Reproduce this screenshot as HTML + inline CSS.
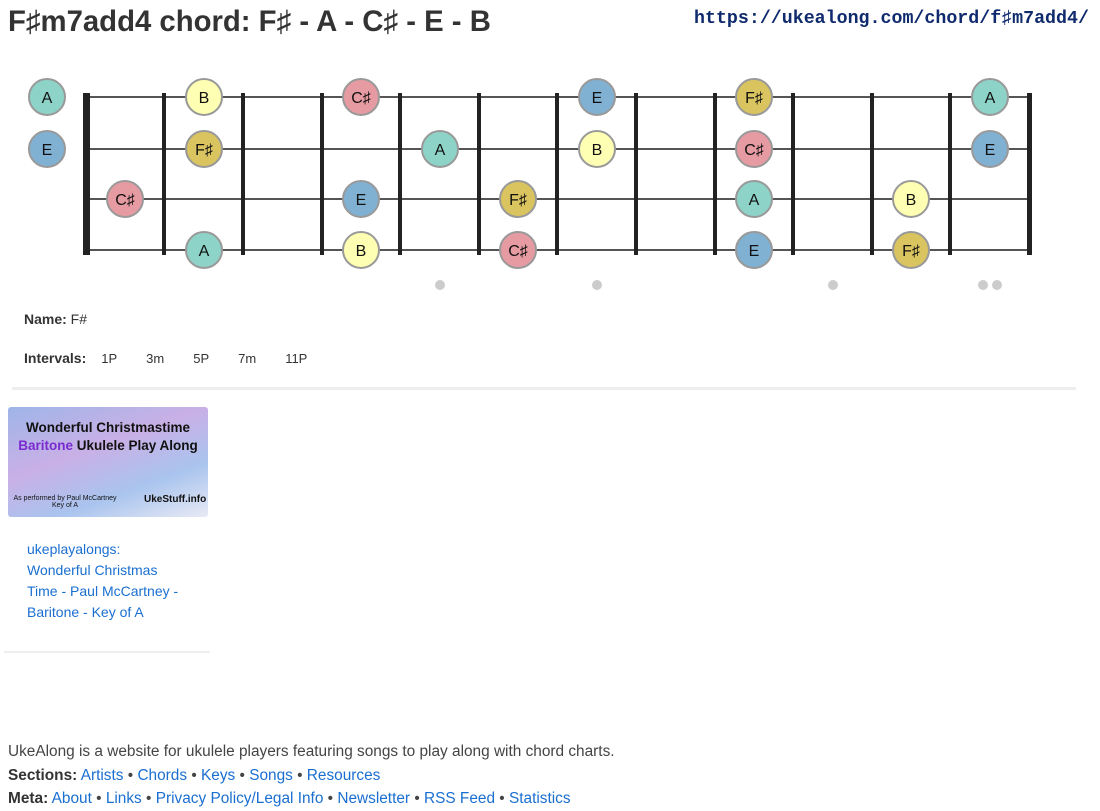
<!DOCTYPE html>
<html><head><meta charset="utf-8"><style>
body{margin:0;width:1100px;height:807px;overflow:hidden;background:#fff;font-family:"Liberation Sans",sans-serif;color:#333;position:relative}
.a{position:absolute}
a{color:#1a6fd0;text-decoration:none}
</style></head><body>
<div class="a" style="left:8px;top:5px;font-size:29.3px;font-weight:bold;color:#333;letter-spacing:0">F♯m7add4 chord: F♯ - A - C♯ - E - B</div>
<div class="a" style="left:694px;top:9px;font-family:'Liberation Mono',monospace;font-size:18.3px;font-weight:bold;color:#102a6e">https://ukealong.com/chord/f♯m7add4/</div>
<svg class="a" style="left:0;top:0" width="1100" height="300" font-family="Liberation Sans,sans-serif" font-size="16">
<g stroke="#555" stroke-width="2"><line x1="86" y1="97" x2="1032" y2="97"/><line x1="86" y1="149" x2="1032" y2="149"/><line x1="86" y1="199" x2="1032" y2="199"/><line x1="86" y1="250" x2="1032" y2="250"/></g>
<g fill="#222"><rect x="83" y="93" width="7" height="162"/><rect x="1027" y="93" width="5" height="162"/>
<rect x="162" y="93" width="4" height="162"/><rect x="241" y="93" width="4" height="162"/><rect x="320" y="93" width="4" height="162"/><rect x="398" y="93" width="4" height="162"/><rect x="477" y="93" width="4" height="162"/><rect x="555" y="93" width="4" height="162"/><rect x="634" y="93" width="4" height="162"/><rect x="713" y="93" width="4" height="162"/><rect x="791" y="93" width="4" height="162"/><rect x="870" y="93" width="4" height="162"/><rect x="948" y="93" width="4" height="162"/></g>
<g fill="#ccc"><circle cx="440" cy="285" r="5"/><circle cx="597" cy="285" r="5"/><circle cx="833" cy="285" r="5"/><circle cx="983" cy="285" r="5"/><circle cx="997" cy="285" r="5"/></g>
<defs>
<g id="A"><circle r="18" fill="#8dd3c7" stroke="#999" stroke-width="2"/><text y="6" text-anchor="middle" fill="#111">A</text></g>
<g id="B"><circle r="18" fill="#ffffb3" stroke="#999" stroke-width="2"/><text y="6" text-anchor="middle" fill="#111">B</text></g>
<g id="C"><circle r="18" fill="#e69aa2" stroke="#999" stroke-width="2"/><text y="6" text-anchor="middle" fill="#111">C♯</text></g>
<g id="E"><circle r="18" fill="#80b1d3" stroke="#999" stroke-width="2"/><text y="6" text-anchor="middle" fill="#111">E</text></g>
<g id="F"><circle r="18" fill="#d9c460" stroke="#999" stroke-width="2"/><text y="6" text-anchor="middle" fill="#111">F♯</text></g>
</defs>
<use href="#A" x="47" y="97"/><use href="#B" x="204" y="97"/><use href="#C" x="361" y="97"/><use href="#E" x="597" y="97"/><use href="#F" x="754" y="97"/><use href="#A" x="990" y="97"/>
<use href="#E" x="47" y="149"/><use href="#F" x="204" y="149"/><use href="#A" x="440" y="149"/><use href="#B" x="597" y="149"/><use href="#C" x="754" y="149"/><use href="#E" x="990" y="149"/>
<use href="#C" x="125" y="199"/><use href="#E" x="361" y="199"/><use href="#F" x="518" y="199"/><use href="#A" x="754" y="199"/><use href="#B" x="911" y="199"/>
<use href="#A" x="204" y="250"/><use href="#B" x="361" y="250"/><use href="#C" x="518" y="250"/><use href="#E" x="754" y="250"/><use href="#F" x="911" y="250"/>
</svg>
<div class="a" style="left:24px;top:311px;font-size:14px"><b>Name:</b> F#</div>
<div class="a" style="left:24px;top:350px;font-size:14px"><b>Intervals:</b><span style="font-size:13px;margin-left:15px">1P</span><span style="font-size:13px;margin-left:29px">3m</span><span style="font-size:13px;margin-left:29px">5P</span><span style="font-size:13px;margin-left:29px">7m</span><span style="font-size:13px;margin-left:29px">11P</span></div>
<div class="a" style="left:12px;top:387px;width:1064px;height:3px;background:#eee"></div>
<div class="a" style="left:8px;top:407px;width:200px;height:110px;border-radius:3px;background:linear-gradient(160deg,#9fb5e8,#c9b0e6 40%,#a9c4ee 70%,#e8eaf5);overflow:hidden">
<div style="position:absolute;left:0;width:200px;top:12px;text-align:center;font-weight:bold;font-size:13.5px;color:#111;line-height:18px">Wonderful Christmastime<br><span style="color:#7a2bd0">Baritone</span> Ukulele Play Along</div>
<div style="position:absolute;left:2px;top:88px;font-size:7px;color:#111;text-align:center;width:110px;white-space:nowrap">As performed by Paul McCartney<br>Key of A</div>
<div style="position:absolute;left:136px;top:87px;font-size:10px;font-weight:bold;color:#111">UkeStuff.info</div></div>
<div class="a" style="left:27px;top:539px;font-size:14px;line-height:21px;width:155px"><a>ukeplayalongs:<br>Wonderful Christmas Time - Paul McCartney - Baritone - Key of A</a></div>
<div class="a" style="left:4px;top:651px;width:206px;height:2px;background:#eee"></div>
<div class="a" style="left:8px;top:740px;font-size:15.4px;line-height:23.5px;color:#444">UkeAlong is a website for ukulele players featuring songs to play along with chord charts.<br><b style="color:#333">Sections:</b> <a>Artists</a> • <a>Chords</a> • <a>Keys</a> • <a>Songs</a> • <a>Resources</a><br><b style="color:#333">Meta:</b> <a>About</a> • <a>Links</a> • <a>Privacy Policy/Legal Info</a> • <a>Newsletter</a> • <a>RSS Feed</a> • <a>Statistics</a></div>
</body></html>
